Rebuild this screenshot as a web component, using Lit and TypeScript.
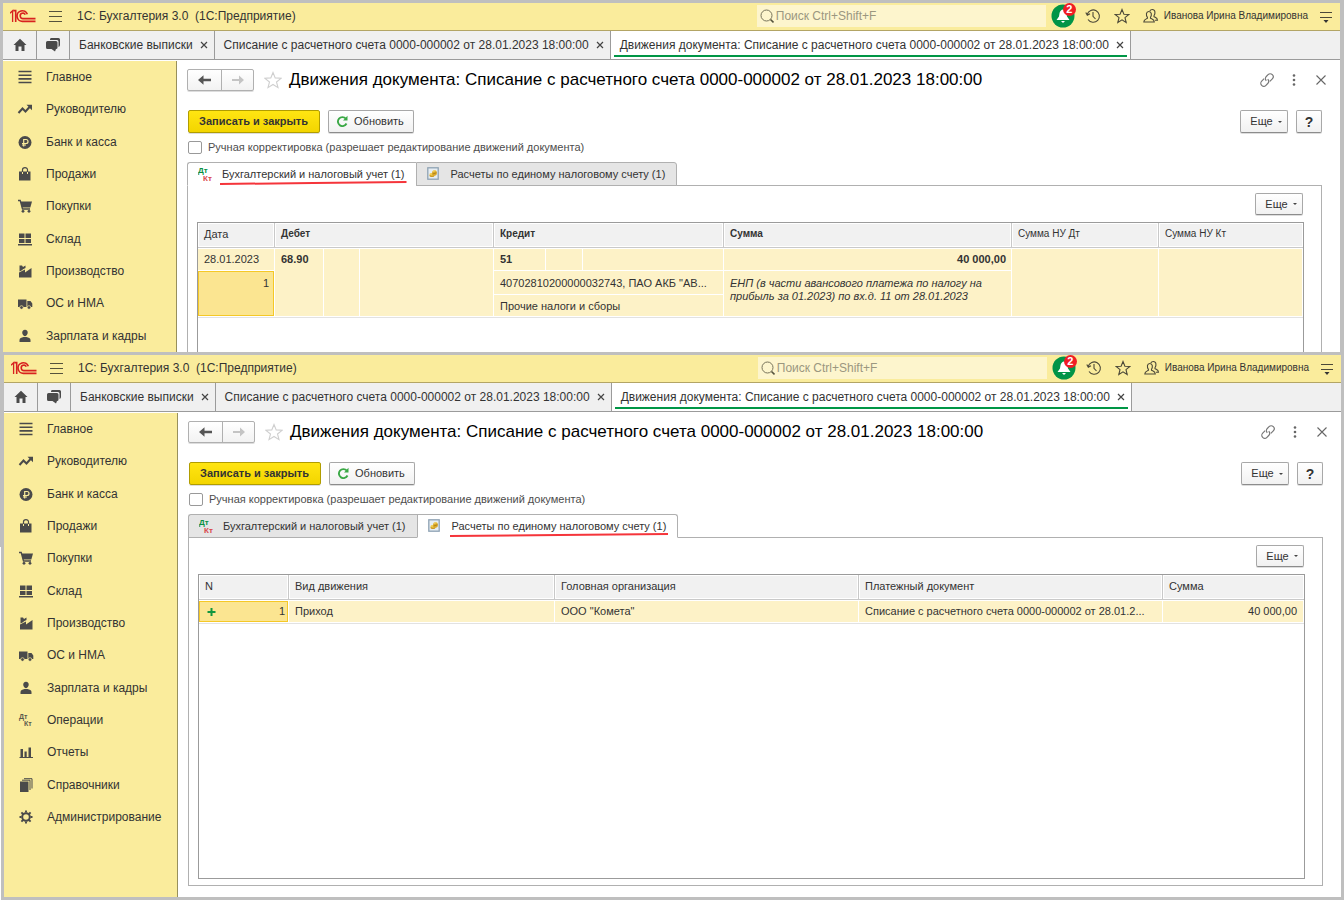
import { LitElement, html, css, svg, nothing, TemplateResult } from "lit";
import { customElement, property } from "lit/decorators.js";
import { classMap } from "lit/directives/class-map.js";

const DOC = "Списание с расчетного счета 0000-000002 от 28.01.2023 18:00:00";

const icon = (body: unknown, w = 16, h = 16) =>
  html`<svg class="ico" width=${w} height=${h} viewBox="0 0 ${w} ${h}" aria-hidden="true">${body}</svg>`;

const logo = icon(
  svg`<g fill="none" stroke="#d8221f">
    <path d="M0 4.200 2.600 1.800V13" stroke-width="1.300"/><path d="M3.200 1.600H5.700V13" stroke-width="1.600"/>
    <path d="M17.300 5.200A5.300 5.300 0 1 0 13 12.300H25.500" stroke-width="1.700"/>
    <path d="M15.300 5.600A2.700 2.700 0 1 0 13 9.600H25.500" stroke-width="1.600"/></g>`, 27, 14);

const burger = icon(svg`<path d="M1 2.500H14M1 7.500H14M1 12.500H14" stroke="#55523c" stroke-width="1.200"/>`, 15, 15);

const closeX = icon(svg`<path d="M1 1 7 7M7 1 1 7" stroke="#444" stroke-width="1.200"/>`, 8, 8);

const G = "#4a4a4a";
const MENU: [string, TemplateResult][] = [
  ["Главное", svg`<path d="M1.500 2.500H14.500M1.500 6.200H14.500M1.500 9.900H14.500M1.500 13.500H14.500" stroke=${G} stroke-width="1.600"/>`],
  ["Руководителю", svg`<path d="M1.500 12 5.500 7.500 8.500 10.500 13 5.500" fill="none" stroke=${G} stroke-width="2"/><path d="M9.500 3.800H15V9.200Z" fill=${G}/>`],
  ["Банк и касса", svg`<circle cx="8" cy="8.500" r="6.500" fill=${G}/><path d="M6.700 12.500V5.500H9A2 2 0 0 1 9 9.500H5M5 11H9" fill="none" stroke="#faec9c" stroke-width="1.200"/>`],
  ["Продажи", svg`<path d="M2 5.500H13.500V14.500H2Z" fill=${G}/><path d="M5.500 6V3.800A2.500 2.200 0 0 1 10.500 3.800V6" fill="none" stroke=${G} stroke-width="1.200"/><path d="M5.500 6V8M10.500 6V8" stroke="#faec9c"/>`],
  ["Покупки", svg`<path d="M1 2.500H3.200L5.500 11H13" fill="none" stroke=${G} stroke-width="1.300"/><path d="M3.500 3.500H15L13.300 9.500H5Z" fill=${G}/><circle cx="6" cy="13.300" r="1.400" fill=${G}/><circle cx="12" cy="13.300" r="1.400" fill=${G}/>`],
  ["Склад", svg`<path d="M2 2.500H7.500V7H2ZM8.500 2.500H14V7H8.500ZM2 8H7.500V12H2ZM8.500 8H14V12H8.500ZM1 13H15V14.600H1Z" fill=${G}/>`],
  ["Производство", svg`<path d="M2 14.500V9.500L8 6.500V9.500L14.500 5V14.500Z" fill=${G}/><path d="M2.500 8.500V2.500H5L6 4 8.500 2.500V5L5.500 6.500V7Z" fill=${G}/>`],
  ["ОС и НМА", svg`<path d="M1 4.500H9.500V12H1ZM10.300 6H13.500L15.300 8.500V12H10.300Z" fill=${G}/><circle cx="4.500" cy="12.500" r="1.800" fill=${G} stroke="#faec9c" stroke-width=".7"/><circle cx="12" cy="12.500" r="1.800" fill=${G} stroke="#faec9c" stroke-width=".7"/>`],
  ["Зарплата и кадры", svg`<path d="M8 1.800C11.800 1.800 11.500 7.500 8 8.200 4.500 7.500 4.200 1.800 8 1.800ZM2.500 14V12C2.500 10 4.500 9.500 6.500 9H9.500C11.500 9.500 13.500 10 13.500 12V14Z" fill=${G}/>`],
  ["Операции", svg`<text x="1" y="7" font-size="7" font-weight="bold" fill="#5a5a4c">Дт</text><text x="6" y="14" font-size="7" font-weight="bold" fill="#5a5a4c">Кт</text>`],
  ["Отчеты", svg`<path d="M2.500 5H5V13H2.500ZM6.500 7.500H8.700V13H6.500ZM10.500 3.500H13V13H10.500ZM1.500 13H15V14H1.500Z" fill=${G}/>`],
  ["Справочники", svg`<path d="M2 4.500H10.500V15H2Z" fill=${G}/><path d="M4 3.200H12V13M6 1.700H14V11.500" fill="none" stroke=${G} stroke-width="1"/>`],
  ["Администрирование", svg`<circle cx="8" cy="8" r="3.800" fill="none" stroke=${G} stroke-width="2"/><path d="M8 1.500V3.500M8 12.500V14.500M1.500 8H3.500M12.500 8H14.500M3.400 3.400 5 5M11 11 12.600 12.600M3.400 12.600 5 11M11 5 12.600 3.400" stroke=${G} stroke-width="1.900"/>`],
];

const dtkt = icon(
  svg`<text x="0" y="7" font-size="8" font-weight="bold" fill="#0a8f43">Дт</text><text x="5" y="15" font-size="8" font-weight="bold" fill="#d9474a">Кт</text>`, 16, 16);

const coins = icon(
  svg`<rect x=".8" y="1.800" width="10.400" height="11.400" fill="#e6edf3" stroke="#8ea2b4" stroke-width="1.300"/>
    <ellipse cx="5" cy="9.500" rx="2.600" ry="1.600" fill="#c8941a"/><ellipse cx="5" cy="8.300" rx="2.600" ry="1.400" fill="#f0cc4e"/>
    <ellipse cx="7.500" cy="7" rx="2.400" ry="2.800" fill="#dca92a"/><path d="M5.500 5.500 9 4.500" stroke="#f3d768" stroke-width="1.200"/>
    <path d="M5.500 8 9.500 6.800" stroke="#9c7612" stroke-width=".700"/>`, 13, 15);

@customElement("doc-window")
export class DocWindow extends LitElement {
  @property({ type: Number }) active = 0;
  @property({ type: Number }) items = MENU.length;
  @property({ type: Boolean, reflect: true }) cut = false;

  static styles = css`
    :host { display: flex; flex-direction: column; min-width: 0; min-height: 0; overflow: hidden;
      background: #fff; color: #333; font: 11px/14px "Liberation Sans", Arial, sans-serif; }
    * { box-sizing: border-box; }
    button, input { font: inherit; color: inherit; margin: 0; }
    button { padding: 0; border: 0; background: none; }
    a { color: inherit; text-decoration: none; }
    .ico { display: block; flex: none; }
    .top { display: flex; align-items: center; height: 28px; flex: none; padding: 0 7px 1px; background: #faec9c; border-bottom: 1px solid #b3a565; }
    .brand { margin: 0 0 0 14px; font-size: 12px; font-weight: normal; white-space: pre; }
    .burger { margin-left: 11px; }
    .search { display: flex; align-items: center; gap: 2px; width: 289px; height: 22px; margin-left: auto; padding-left: 3px; background: #fdf5cd; }
    .search input { flex: 1; min-width: 0; border: 0; padding: 0; background: none; font-size: 12px; }
    .search input::placeholder { color: #9b9780; opacity: 1; }
    .tools { display: flex; align-items: center; gap: 13px; margin-left: 5px; }
    .bell { position: relative; margin-right: -3px; }
    .badge { position: absolute; top: -1px; left: 12px; width: 13px; height: 13px; border-radius: 50%; background: #f01d24; color: #fff; font-size: 11px; line-height: 13px; font-weight: bold; text-align: center; }
    .user { font-size: 10px; margin: 0 -2px 0 -8px; }
    .tabs { display: flex; height: 29px; flex: none; background: #f0f0f0; border-bottom: 1px solid #9b9b9b; }
    .tab { display: flex; align-items: center; gap: 7px; padding: 0 6px 0 9px; border-right: 1px solid #9b9b9b; font-size: 12px; white-space: nowrap; position: relative; }
    .tab.on { background: #fff; }
    .tab.on::after { content: ""; position: absolute; left: 3px; right: 3px; bottom: 2px; height: 2px; background: #009646; }
    .sq { justify-content: center; width: 33px; padding: 0; }
    .home { width: 34px; }
    .main { display: flex; flex: 1; min-height: 0; padding-top: 1px; }
    .side { width: 174px; flex: none; background: #faec9c; border-right: 1px solid #98905c; }
    .list { display: grid; grid-auto-rows: 1fr; height: 420px; margin: 0; padding: 0; list-style: none; font-size: 12px; }
    :host([cut]) .list { height: 100%; }
    .list a { display: flex; align-items: center; gap: 13px; height: 100%; padding-left: 14px; }
    .page { display: flex; flex-direction: column; flex: 1; min-width: 0; padding: 8px 18px 11px 10px; }
    .head { display: flex; align-items: center; height: 22px; flex: none; }
    .nav { display: flex; height: 22px; border: 1px solid #b0b0b0; border-radius: 2px; background: linear-gradient(#fff, #f2f2f2); box-shadow: 0 1px 0 #ddd; }
    .nav button { display: grid; place-items: center; width: 33px; }
    .nav button + button { width: 32px; border-left: 1px solid #b0b0b0; }
    .star { margin: 0 7px 0 10px; }
    h1 { margin: 0; font-size: 17px; line-height: 20px; font-weight: normal; color: #000; white-space: nowrap; }
    .acts { display: flex; align-items: center; gap: 12px; margin-left: auto; margin-right: -7px; }
    .cmds { display: flex; align-items: center; gap: 8px; margin: 19px 0 7px 1px; flex: none; }
    .btn { display: flex; align-items: center; justify-content: center; height: 23px; padding: 0 9px 1px; border: 1px solid #a8a8a8; border-bottom-color: #8c8c8c; border-radius: 2px; background: linear-gradient(#fff, #f1f1f1); box-shadow: 0 1px 0 #ddd; white-space: nowrap; }
    .btn.go { padding: 0 11px 1px 10px; background: linear-gradient(#ffe512, #f3d500); border-color: #b19d00; color: #333; font-weight: bold; }
    .btn.more { gap: 5px; width: 48px; padding: 0 0 1px 4px; }
    .btn.help { width: 26px; padding: 0; font-size: 14px; font-weight: bold; }
    .btn.upd { gap: 6px; padding: 0 9px 1px 7px; }
    .push { margin-left: auto; }
    .check { display: flex; align-items: center; gap: 6px; height: 14px; margin: 0 0 8px 1px; flex: none; color: #4d4d4d; }
    .check input { appearance: none; width: 14px; height: 13px; border: 1px solid #999; border-radius: 2px; background: #fff; }
    .ptabs { display: flex; flex: none; height: 24px; margin-bottom: -1px; position: relative; }
    .ptab { display: flex; align-items: center; padding: 0 9px 1px; border: 1px solid #b0b0b0; background: #e5e5e5; white-space: nowrap; }
    .ptab.on { background: #fff; border-bottom-color: #fff; }
    .ptab:first-child { border-right: 0; border-radius: 3px 0 0 0; gap: 8px; padding-left: 10px; padding-right: 11px; }
    .ptab:last-child { border-radius: 0 3px 0 0; gap: 11px; padding-left: 10px; padding-right: 11px; }
    .lbl { position: relative; }
    .mark { position: absolute; left: -2px; bottom: -4px; width: calc(100% + 4px); height: 4px; }
    .panel { display: flex; flex-direction: column; flex: 1; min-height: 0; border: 1px solid #b0b0b0; padding: 7px 17px 6px 9px; }
    :host([cut]) .page { padding-bottom: 0; }
    :host([cut]) .panel { border-bottom: 0; padding-bottom: 0; }
    .panel .btn { align-self: flex-end; height: 22px; flex: none; margin: 0 1px 7px 0; }
    .box { flex: 1; min-height: 0; overflow: hidden; border: 1px solid #9b9b9b; }
    :host([cut]) .box { border-bottom: 0; }
    table { width: 100%; table-layout: fixed; border-collapse: separate; border-spacing: 0; border-bottom: 1px solid #e2e2e2; }
    th { height: 25px; padding: 0 6px 2px; text-align: left; font-weight: normal; background: #f1f1f1; border-right: 1px solid #c9c9c9; border-bottom: 1px solid #c9c9c9; box-shadow: inset 0 0 0 1px #fff; white-space: nowrap; }
    th.b { font-weight: bold; font-size: 10px; }
    th.s { font-size: 10px; }
    td { padding: 0 6px 2px; background: #fdf2c7; border-right: 1px solid #fff; border-bottom: 1px solid #fff; white-space: nowrap; overflow: hidden; text-overflow: ellipsis; }
    th:last-child { border-right: 0; }
    tr.r1 td { height: 23px; border-top: 1px solid #fff; }
    tr.r2 td { height: 24px; padding-bottom: 0; }
    tr.r3 td { height: 22px; padding-bottom: 0; }
    td.t { vertical-align: top; padding-top: 3px; }
    td.num { text-align: right; padding-right: 5px; }
    tr.r1 td.num:last-child { padding-right: 6px; }
    td.sel { background: #fbe591; box-shadow: inset 0 0 0 1px #f5c827; }
    td.sel.t { padding-top: 5px; }
    td.dsc { font-style: italic; line-height: 13px; white-space: normal; vertical-align: top; padding-top: 6px; }
    .b { font-weight: bold; }
    .plus { display: flex; align-items: center; justify-content: space-between; padding-left: 2px; margin-right: -2px; }
    .plus .ico { margin-top: 2px; }
  `;

  private entries() {
    const w = [77, 49, 36, 134, 52, 37, 141, 0, 147, 144];
    return html`<table>
      <colgroup>${w.map((n) => html`<col width=${n || nothing}>`)}</colgroup>
      <thead><tr><th>Дата</th><th class="b" colspan="3">Дебет</th><th class="b" colspan="3">Кредит</th><th class="b">Сумма</th><th class="s">Сумма НУ Дт</th><th class="s">Сумма НУ Кт</th></tr></thead>
      <tbody>
        <tr class="r1"><td>28.01.2023</td><td class="b t" rowspan="3">68.90</td><td rowspan="3"></td><td rowspan="3"></td>
          <td class="b">51</td><td></td><td></td><td class="b num">40 000,00</td><td rowspan="3"></td><td rowspan="3"></td></tr>
        <tr class="r2"><td class="sel num t" rowspan="2">1</td><td colspan="3">40702810200000032743, ПАО АКБ "АВ...</td>
          <td class="dsc" rowspan="2">ЕНП (в части авансового платежа по налогу на прибыль за 01.2023) по вх.д. 11 от 28.01.2023</td></tr>
        <tr class="r3"><td colspan="3">Прочие налоги и сборы</td></tr>
      </tbody></table>`;
  }

  private settlements() {
    const w = [90, 266, 304, 0, 141];
    return html`<table>
      <colgroup>${w.map((n) => html`<col width=${n || nothing}>`)}</colgroup>
      <thead><tr><th>N</th><th>Вид движения</th><th>Головная организация</th><th>Платежный документ</th><th>Сумма</th></tr></thead>
      <tbody><tr class="r1"><td class="sel num"><div class="plus">${icon(svg`<path d="M4.500 1V9M.500 5H8.500" stroke="#12963f" stroke-width="2"/>`, 9, 9)}1</div></td>
        <td>Приход</td><td>ООО "Комета"</td><td>Списание с расчетного счета 0000-000002 от 28.01.2...</td><td class="num">40 000,00</td></tr></tbody></table>`;
  }

  private more(cls = "") {
    return html`<button class="btn more ${cls}" type="button">Еще${icon(svg`<path d="M0 2H4L2 4Z" fill="#444"/>`, 4, 5)}</button>`;
  }

  private label(text: string, on: boolean) {
    return html`<span class="lbl">${text}${on
      ? html`<svg class="mark" viewBox="0 0 100 4" preserveAspectRatio="none" aria-hidden="true"><path d="M0 2 50 1 100 0V2L50 3 0 4Z" fill="#f5353b"/></svg>`
      : nothing}</span>`;
  }

  render() {
    return html`
      <header class="top">
        ${logo}
        <button class="burger" type="button" aria-label="Меню">${burger}</button>
        <h2 class="brand">1С: Бухгалтерия 3.0  (1С:Предприятие)</h2>
        <label class="search">
          ${icon(svg`<circle cx="6.500" cy="6.500" r="5.500" fill="none" stroke="#77735a"/><path d="M10.500 10.500 13.500 13.500" stroke="#55523c" stroke-width="1.600"/>`, 14, 15)}
          <input type="search" placeholder="Поиск Ctrl+Shift+F" aria-label="Поиск">
        </label>
        <div class="tools">
          <button class="bell" type="button" aria-label="Уведомления">
            ${icon(svg`<circle cx="12" cy="12" r="11.500" fill="#019447"/><path d="M12 5.500C15.500 6 15.500 9.500 16 12.500L18.500 16H5.500L8 12.500C8.500 9.500 8.500 6 12 5.500ZM10 17H14L12 19Z" fill="#fff"/>`, 24, 24)}
            <span class="badge">2</span>
          </button>
          <button type="button" aria-label="История">${icon(svg`<path d="M2.200 6.500A6.200 6.200 0 1 1 3 11.500M.800 4.500 2.300 7.300 5 5.800M8 4V8.300L10.500 11" fill="none" stroke="#4b4838" stroke-width="1.100"/>`)}</button>
          <button type="button" aria-label="Избранное">${icon(svg`<path d="M8 1.500 9.900 6.200 14.800 6.500 11 9.700 12.200 14.500 8 11.900 3.800 14.500 5 9.700 1.200 6.500 6.100 6.200Z" fill="none" stroke="#4b4838" stroke-width="1.100"/>`)}</button>
          <button type="button" aria-label="Пользователь">${icon(svg`<path d="M6.800 3C7.300 2 8.200 1.500 9.300 1.500 12.500 1.500 12.500 5.500 11 7.700V8.700C13 9.700 14.500 10 14.500 12.300H12" fill="none" stroke="#4b4838" stroke-width="1.100"/><path d="M5.800 3.500C8.900 3.500 8.800 7.300 7.500 9.300V10.300C9.300 11.300 11.300 11.500 11.300 14H.800C.800 11.500 2.700 11.300 4.400 10.300V9.300C2.900 7.300 2.900 3.500 5.800 3.500Z" fill="none" stroke="#4b4838" stroke-width="1.100"/>`)}</button>
          <span class="user">Иванова Ирина Владимировна</span>
          <button type="button" aria-label="Настройки">${icon(svg`<path d="M1 3.500H13M1 8.500H13" stroke="#4b4838" stroke-width="1.200"/><path d="M4.500 11H9.500L7 14Z" fill="#333"/>`, 14, 15)}</button>
        </div>
      </header>
      <nav class="tabs">
        <button class="tab sq home" type="button" aria-label="Начальная страница">${icon(svg`<path d="M8 1.800 14.500 8H12.500V14H9.500V9.500H6.500V14H3.500V8H1.500Z" fill=${G}/>`)}</button>
        <button class="tab sq" type="button" aria-label="Обсуждения">${icon(svg`<path d="M5 2.500Q5 1 6 1H13.500Q15 1 15 2.500V8Q15 9.500 13.500 10V4.500Q13.500 3 12 3H5Z" fill=${G}/><path d="M2.500 4H11Q12.500 4 12.500 5.500V10.500Q12.500 12 11 12L10 14.500 6.500 12H2.500Q1 12 1 10.500V5.500Q1 4 2.500 4Z" fill=${G}/>`)}</button>
        <a class="tab" href="#">Банковские выписки ${closeX}</a>
        <a class="tab" href="#">${DOC} ${closeX}</a>
        <a class="tab on" href="#">Движения документа: ${DOC} ${closeX}</a>
      </nav>
      <div class="main">
        <nav class="side"><ul class="list">
          ${MENU.slice(0, this.items).map(([t, i]) => html`<li><a href="#">${icon(i)}${t}</a></li>`)}
        </ul></nav>
        <main class="page">
          <div class="head">
            <div class="nav">
              <button type="button" aria-label="Назад">${icon(svg`<path d="M0 6 5.500 1.300V4.800H13V7.200H5.500V10.700Z" fill="#555"/>`, 14, 12)}</button>
              <button type="button" aria-label="Вперед">${icon(svg`<path d="M13 6 8 1.500V5H1V7H8V10.500Z" fill="#c4c4c4"/>`, 14, 12)}</button>
            </div>
            <button class="star" type="button" aria-label="В избранное">${icon(svg`<path d="M9 1.500 11.200 6.900 17 7.300 12.500 11 14 16.600 9 13.500 4 16.600 5.500 11 1 7.300 6.800 6.900Z" fill="none" stroke="#cfcfcf" stroke-width="1.100"/>`, 18, 18)}</button>
            <h1>Движения документа: ${DOC}</h1>
            <div class="acts">
              <button type="button" aria-label="Ссылка">${icon(svg`<g fill="none" stroke="#777" stroke-width="1.200" transform="rotate(-45 8 8)"><path d="M7 5H3.500A3 3 0 0 0 3.500 11H6A3 3 0 0 0 9 8"/><path d="M9 11H12.500A3 3 0 0 0 12.500 5H10A3 3 0 0 0 7 8"/></g>`)}</button>
              <button type="button" aria-label="Еще">${icon(svg`<g fill="#666"><circle cx="7" cy="3.500" r="1.300"/><circle cx="7" cy="8" r="1.300"/><circle cx="7" cy="12.500" r="1.300"/></g>`, 14, 16)}</button>
              <button type="button" aria-label="Закрыть">${icon(svg`<path d="M3.500 3.500 12.500 12.500M12.500 3.500 3.500 12.500" stroke="#666" stroke-width="1.100"/>`)}</button>
            </div>
          </div>
          <div class="cmds">
            <button class="btn go" type="button">Записать и закрыть</button>
            <button class="btn upd" type="button">${icon(svg`<path d="M9.800 3.600A4.500 4.500 0 1 0 10.500 8.500" fill="none" stroke="#3aa845" stroke-width="1.900"/><path d="M11.500 .800V5.500H7Z" fill="#3aa845"/>`, 12, 12)} Обновить</button>
            ${this.more("push")}
            <button class="btn help" type="button" aria-label="Справка">?</button>
          </div>
          <label class="check"><input type="checkbox">Ручная корректировка (разрешает редактирование движений документа)</label>
          <div class="ptabs" role="tablist">
            <button role="tab" type="button" class=${classMap({ ptab: true, on: this.active === 0 })}>${dtkt}${this.label("Бухгалтерский и налоговый учет (1)", this.active === 0)}</button>
            <button role="tab" type="button" class=${classMap({ ptab: true, on: this.active === 1 })}>${coins}${this.label("Расчеты по единому налоговому счету (1)", this.active === 1)}</button>
          </div>
          <section class="panel">
            ${this.more()}
            <div class="box">${this.active === 0 ? this.entries() : this.settlements()}</div>
          </section>
        </main>
      </div>`;
  }
}

@customElement("app-root")
export class AppRoot extends LitElement {
  static styles = css`
    :host { display: grid; grid-template-rows: minmax(0, 349fr) minmax(0, 542fr); gap: 3px; box-sizing: border-box;
      height: 100vh; padding: 3px; background: linear-gradient(#fff, #fff) 0 547px / 1px 100% no-repeat #bfbfbf; }
    .first { margin-right: 1px; }
    .second { margin-left: 1px; }
  `;
  render() {
    return html`<doc-window class="first" cut .items=${9} .active=${0}></doc-window>
      <doc-window class="second" .active=${1}></doc-window>`;
  }
}
